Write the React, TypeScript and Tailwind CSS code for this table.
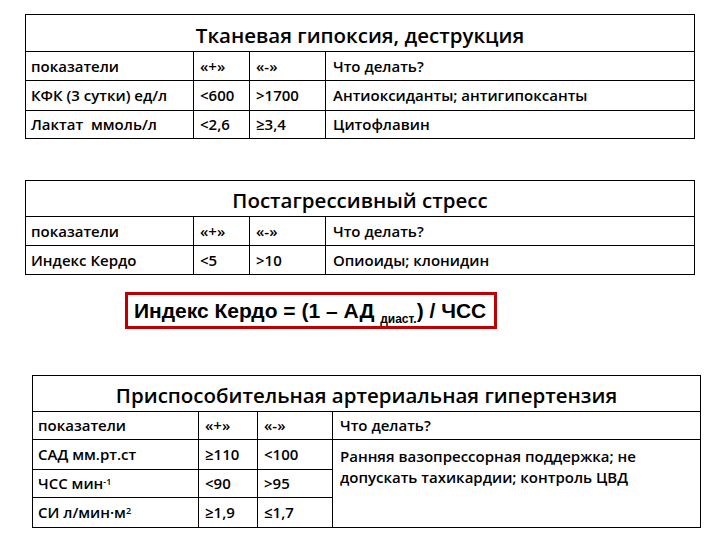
import React from "react";

const font = { fontFamily: '"Open Sans", "Noto Sans", sans-serif' };

type Row = { label: React.ReactNode; plus: string; minus: string; todo?: string };

function Table({
  title,
  rows,
  cols,
  headH,
  rowH,
  className,
  mergedTodo,
}: {
  title: string;
  rows: Row[];
  cols: number[];
  headH: string;
  rowH: string[];
  className: string;
  mergedTodo?: string;
}) {
  return (
    <table className={`border-collapse border border-black table-fixed ${className}`}>
      <colgroup>
        {cols.map((w, i) => (
          <col key={i} style={{ width: w }} />
        ))}
        <col />
      </colgroup>
      <tbody>
        <tr className={headH}>
          <td colSpan={4} className="border border-black text-center text-[20.5px] font-semibold text-black pt-1">
            {title}
          </td>
        </tr>
        <tr className={rowH[0]}>
          <td className="border border-black px-[5px]">показатели</td>
          <td className="border border-black px-[6px]">«+»</td>
          <td className="border border-black px-[6px]">«-»</td>
          <td className="border border-black px-[7px]">Что делать?</td>
        </tr>
        {rows.map((r, i) => (
          <tr key={i} className={rowH[i + 1]}>
            <td className="border border-black px-[5px] whitespace-pre">{r.label}</td>
            <td className="border border-black px-[6px]">{r.plus}</td>
            <td className="border border-black px-[6px]">{r.minus}</td>
            {mergedTodo === undefined ? (
              <td className="border border-black px-[7px]">{r.todo}</td>
            ) : i === 0 ? (
              <td rowSpan={rows.length} className="border border-black px-[7px] pt-[6px] align-top leading-[21px]">
                {mergedTodo}
              </td>
            ) : null}
          </tr>
        ))}
      </tbody>
    </table>
  );
}

export default function App() {
  return (
    <div className="w-[720px] h-[540px] bg-white text-black text-[15px] font-semibold overflow-hidden flex flex-col" style={font}>
      <Table
        className="mt-[14px] ml-[25px] w-[670px]"
        title="Тканевая гипоксия, деструкция"
        cols={[168, 56, 76]}
        headH="h-[37px]"
        rowH={["h-[29px]", "h-[30px]", "h-[28px]"]}
        rows={[
          { label: "КФК (3 сутки) ед/л", plus: "<600", minus: ">1700", todo: "Антиоксиданты; антигипоксанты" },
          { label: "Лактат  ммоль/л", plus: "<2,6", minus: "≥3,4", todo: "Цитофлавин" },
        ]}
      />

      <Table
        className="mt-[41px] ml-[25px] w-[670px]"
        title="Постагрессивный стресс"
        cols={[168, 56, 76]}
        headH="h-[35px]"
        rowH={["h-[29px]", "h-[29px]"]}
        rows={[{ label: "Индекс Кердо", plus: "<5", minus: ">10", todo: "Опиоиды; клонидин" }]}
      />

      <div
        className="mt-[17px] ml-[125px] w-[372px] h-[37px] border-[3px] border-[#c00000] flex items-center pl-[6px] text-[21px] font-bold whitespace-nowrap"
        style={{ fontFamily: '"Liberation Sans", Arial, sans-serif' }}
      >
        <span>
          Индекс Кердо = (1 – АД <span className="text-[12px] relative top-[5px]">диаст.</span>) / ЧСС
        </span>
      </div>

      <Table
        className="mt-[46px] ml-[32px] w-[669px]"
        title="Приспособительная артериальная гипертензия"
        cols={[166, 59, 75]}
        headH="h-[36px]"
        rowH={["h-[28px]", "h-[30px]", "h-[28px]", "h-[30px]"]}
        mergedTodo="Ранняя вазопрессорная поддержка; не допускать тахикардии; контроль ЦВД"
        rows={[
          { label: "САД мм.рт.ст", plus: "≥110", minus: "<100" },
          {
            label: (
              <>
                ЧСС мин<sup className="text-[9px]">-1</sup>
              </>
            ),
            plus: "<90",
            minus: ">95",
          },
          {
            label: (
              <>
                СИ л/мин·м<sup className="text-[9px]">2</sup>
              </>
            ),
            plus: "≥1,9",
            minus: "≤1,7",
          },
        ]}
      />
    </div>
  );
}
